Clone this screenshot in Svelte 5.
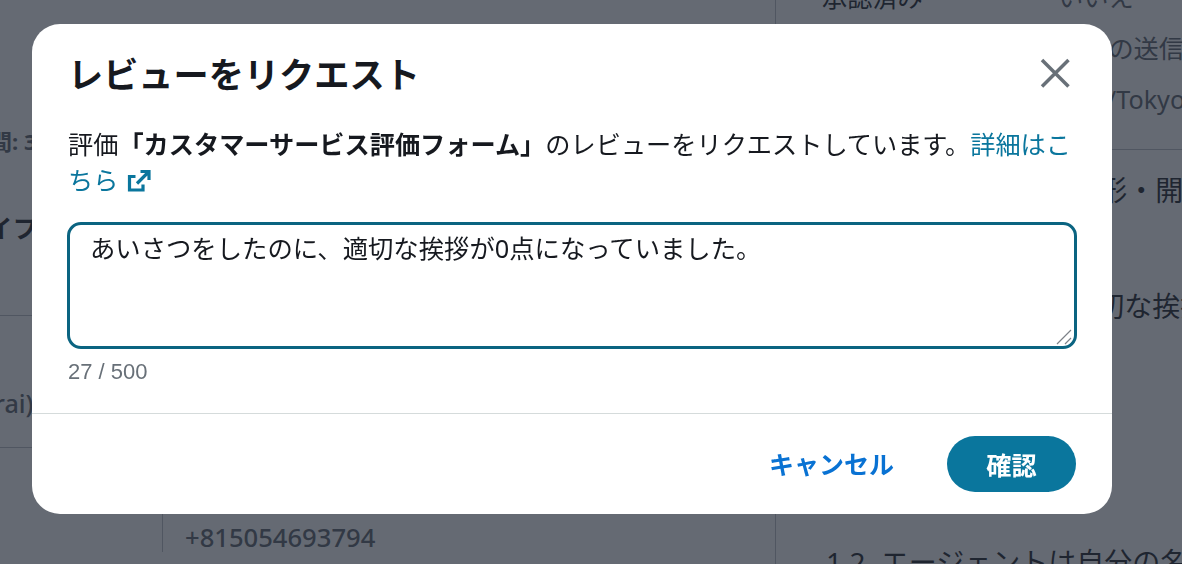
<script lang="ts">
	let comment = $state('あいさつをしたのに、適切な挨拶が0点になっていました。');
	const max = 500;
</script>

<div class="page">
	<div class="side">
		<p class="meta">時間: 30分</p>
		<p class="side-title">ライフ</p>
		<hr />
		<p class="agent">Sarai)</p>
		<hr class="second" />
	</div>
	<div class="main">
		<p>+815054693794</p>
	</div>
	<div class="detail">
		<dl>
			<dt>承認済み</dt>
			<dd>いいえ</dd>
			<dt>通知</dt>
			<dd>評価の送信</dd>
			<dt>タイムゾーン</dt>
			<dd>Asia/Tokyo</dd>
		</dl>
		<hr />
		<h2>1. エージェントの対応形・開始</h2>
		<p class="q-one">1.1 エージェントは適切な挨拶</p>
		<p class="q-two">1.2 エージェントは自分の名前</p>
	</div>
</div>

<div class="overlay">
	<div class="modal">
		<header>
			<h1>レビューをリクエスト</h1>
			<button class="close" aria-label="閉じる">
				<svg width="34" height="34" viewBox="0 0 34 34">
					<path d="M4 4L30.5 30.5M30.5 4L4 30.5" />
				</svg>
			</button>
		</header>
		<div class="body">
			<p class="intro">
				評価<b>「カスタマーサービス評価フォーム」</b>のレビューをリクエストしています。<a href="#help">詳細はこちら<svg class="ext" width="24" height="24" viewBox="0 0 24 24">
						<path d="M8.5 7.5H2.5V21H16V15.5" />
						<path d="M10 14.5L21.5 3M13.5 2.5H22V11" />
					</svg></a>
			</p>
			<div class="field">
				<textarea bind:value={comment}></textarea>
				<svg class="grip" width="18" height="18" viewBox="0 0 18 18">
					<path d="M1 16L15 2M9 16L15 10" />
				</svg>
			</div>
			<div class="count">{comment.length} / {max}</div>
		</div>
		<footer>
			<button class="cancel">キャンセル</button>
			<button class="confirm">確認</button>
		</footer>
	</div>
</div>

<style>
:global(body) {
	margin: 0;
	background: #fff;
	overflow: hidden;
}
.page {
	display: grid;
	grid-template-columns: 162px 613px 407px;
	grid-template-rows: 564px;
	height: 564px;
	overflow: hidden;
	font-family: "Noto Sans", "Noto Sans CJK JP", sans-serif;
	color: #16191f;
	font-size: 25.2px;
}
p {
	margin: 0;
}
hr {
	border: 0;
	border-top: 1px solid #b8bcc2;
	margin: 0;
}
.side {
	margin-left: -32px;
}
.meta {
	margin-top: 123px;
	line-height: 36px;
	font-size: 22px;
	font-weight: 700;
	color: #545b64;
}
.side-title {
	margin-top: 51px;
	margin-left: -6px;
	margin-bottom: 69px;
	line-height: 36px;
	font-weight: 700;
}
.agent {
	margin-top: 69px;
	margin-left: -2px;
	line-height: 36px;
	font-weight: 500;
	color: #545b64;
}
.second {
	margin-top: 26px;
}
.main {
	align-self: end;
	height: 120px;
	margin-bottom: 12px;
	border-left: 1px solid #b8bcc2;
	padding-left: 22px;
	display: flex;
	align-items: flex-end;
	color: #545b64;
	font-weight: 500;
	font-size: 25.6px;
}
.main p {
	margin-bottom: -4px;
	line-height: 36px;
}
.detail {
	border-left: 1px solid #b8bcc2;
	white-space: nowrap;
}
dl {
	display: grid;
	grid-template-columns: 236px 1fr;
	grid-template-rows: 36px 36px 36px;
	row-gap: 15px;
	margin: -21px 0 0;
	padding: 0 0 32px 46px;
	line-height: 36px;
}
dt {
	color: #16191f;
}
dd {
	margin: 0;
	color: #545b64;
}
h2 {
	margin: 20px 0 0 41px;
	font-size: 28px;
	line-height: 40px;
	font-weight: 400;
}
.q-one {
	margin: 78px 0 0 50px;
	line-height: 36px;
	font-size: 28px;
}
.q-two {
	margin: 220px 0 0 50px;
	line-height: 36px;
	font-size: 28px;
	word-spacing: 8px;
}

.overlay {
	position: fixed;
	inset: 0;
	background: rgba(35, 43, 55, 0.7);
	padding: 24px 70px 50px 32px;
	font-family: "Noto Sans", "Noto Sans CJK JP", sans-serif;
	color: #16191f;
}
.modal {
	width: 1080px;
	height: 490px;
	background: #fff;
	border-radius: 28px;
	display: flex;
	flex-direction: column;
}
header {
	display: flex;
	justify-content: space-between;
	align-items: center;
	padding: 20px 40px 4px 36px;
	height: 60px;
}
h1 {
	margin: 0;
	font-size: 35.2px;
	line-height: 50px;
	font-weight: 700;
}
.close {
	all: unset;
	display: flex;
	cursor: pointer;
	margin-top: -2px;
}
.close path {
	fill: none;
	stroke: #687078;
	stroke-width: 3.5;
}
.body {
	padding: 18px 35px 0 35px;
	flex: 1;
}
.intro {
	padding: 0 0 0 1px;
	font-size: 25.2px;
	line-height: 36px;
	width: 1006px;
}
a {
	color: #0a769d;
	text-decoration: none;
}
.ext {
	margin-left: 9px;
	vertical-align: -3px;
}
.ext path {
	fill: none;
	stroke: #0a769d;
	stroke-width: 3.2;
}
.field {
	position: relative;
	width: 1010px;
	margin-top: 24px;
}
textarea {
	display: block;
	box-sizing: border-box;
	width: 100%;
	height: 127px;
	padding: 5px 20px 0;
	border: 3px solid #0b6481;
	border-radius: 14px;
	outline: none;
	resize: none;
	font-family: inherit;
	font-size: 25.35px;
	line-height: 36px;
	color: #16191f;
}
.grip {
	position: absolute;
	right: 3px;
	bottom: 3px;
	pointer-events: none;
}
.grip path {
	fill: none;
	stroke: #7d8288;
	stroke-width: 1.2;
}
.count {
	margin: 5px 0 0 1px;
	font-family: "Liberation Sans", sans-serif;
	font-size: 22px;
	line-height: 36px;
	color: #687078;
}
footer {
	display: flex;
	justify-content: flex-end;
	align-items: center;
	gap: 53px;
	height: 100px;
	padding: 0 36px 0 0;
	border-top: 1px solid #d5dbdb;
}
footer button {
	all: unset;
	cursor: pointer;
	font-size: 25.2px;
	font-weight: 700;
}
footer .cancel {
	color: #0972d3;
	font-size: 25px;
	padding-bottom: 2px;
}
.confirm {
	display: flex;
	align-items: center;
	justify-content: center;
	width: 129px;
	height: 56px;
	border-radius: 28px;
	background: #0a769d;
	color: #fff;
}
</style>
